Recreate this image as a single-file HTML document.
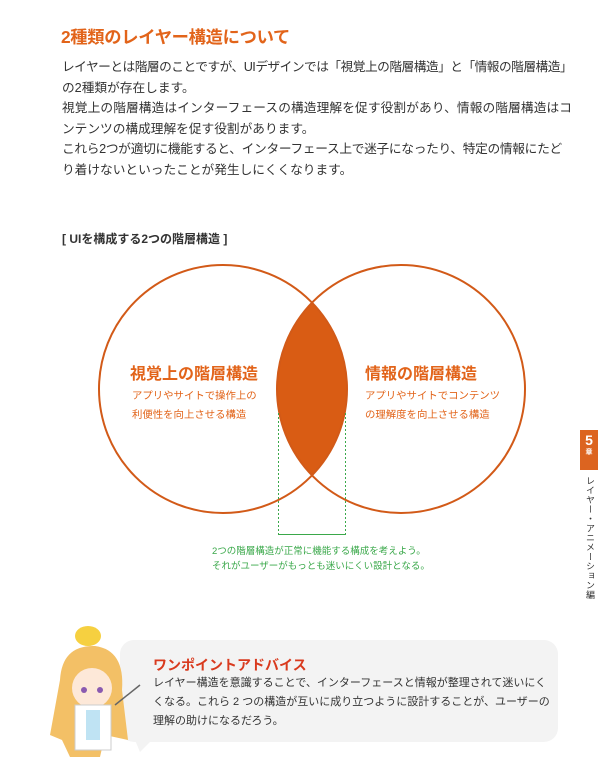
<!DOCTYPE html>
<html><head><meta charset="utf-8"><style>
body{margin:0;width:598px;height:757px;background:#fff;position:relative;overflow:hidden;font-family:"Liberation Sans","Noto Sans CJK JP",sans-serif;color:#333}
.a{position:absolute;white-space:nowrap}
h1{position:absolute;left:61px;top:23px;margin:0;font-size:17.3px;color:#e2641a;font-weight:bold;letter-spacing:-0.3px}
.body{position:absolute;left:62px;top:57px;font-size:12.7px;line-height:20.5px;width:510px;color:#333}
.body div{white-space:nowrap}
.j{text-align:justify;text-align-last:justify;white-space:normal!important}
</style></head><body>
<h1>2種類のレイヤー構造について</h1>
<div class="body">
<div class="j" style="letter-spacing:-0.6px">レイヤーとは階層のことですが、UIデザインでは「視覚上の階層構造」と「情報の階層構造」</div>
<div>の2種類が存在します。</div>
<div class="j">視覚上の階層構造はインターフェースの構造理解を促す役割があり、情報の階層構造はコ</div>
<div>ンテンツの構成理解を促す役割があります。</div>
<div style="letter-spacing:-0.3px">これら2つが適切に機能すると、インターフェース上で迷子になったり、特定の情報にたど</div>
<div>り着けないといったことが発生しにくくなります。</div>
</div>
<div class="a" style="left:62px;top:230px;font-size:12px;font-weight:bold;color:#333">[ UIを構成する2つの階層構造 ]</div>
<svg class="a" style="left:0;top:0" width="598" height="757">
<defs><clipPath id="c"><circle cx="223" cy="389" r="124"/></clipPath></defs>
<circle cx="401" cy="389" r="124" fill="#d95c14" clip-path="url(#c)"/>
<circle cx="223" cy="389" r="124" fill="none" stroke="#d25a18" stroke-width="2"/>
<circle cx="401" cy="389" r="124" fill="none" stroke="#d25a18" stroke-width="2"/>
<path d="M278.5 413V534.5H345.5V413" fill="none" stroke="#3aa84a" stroke-width="1" stroke-dasharray="2,2"/>
<line x1="278" y1="534.5" x2="346" y2="534.5" stroke="#3aa84a" stroke-width="1"/>
<rect x="580" y="430" width="18" height="40" fill="#dc6420"/>
<rect x="120" y="640" width="438" height="102" rx="14" fill="#f3f3f3"/>
<path d="M135 740 L140 752 L152 740Z" fill="#f3f3f3"/>
<ellipse cx="88" cy="636" rx="13" ry="10" fill="#f6d040"/>
<path d="M60 680 Q62 645 95 646 Q125 650 122 690 L128 740 L105 735 L100 757 L70 757 L62 740 L50 735 Z" fill="#f3c066"/>
<ellipse cx="92" cy="688" rx="20" ry="20" fill="#fde8d8"/>
<rect x="75" y="705" width="36" height="45" fill="#fff" stroke="#ccc"/>
<rect x="86" y="710" width="14" height="30" fill="#bfe3f3"/>
<circle cx="84" cy="690" r="3" fill="#8a5ab0"/><circle cx="100" cy="690" r="3" fill="#8a5ab0"/>
<line x1="115" y1="705" x2="140" y2="685" stroke="#666" stroke-width="1.5"/>
</svg>
<div class="a" style="left:130px;top:360px;font-size:16px;font-weight:bold;color:#e2641a">視覚上の階層構造</div>
<div class="a" style="left:132px;top:387px;font-size:10.4px;line-height:19px;color:#e2641a">アプリやサイトで操作上の<br>利便性を向上させる構造</div>
<div class="a" style="left:365px;top:360px;font-size:16px;font-weight:bold;color:#e2641a">情報の階層構造</div>
<div class="a" style="left:365px;top:387px;font-size:10.4px;line-height:19px;color:#e2641a">アプリやサイトでコンテンツ<br>の理解度を向上させる構造</div>
<div class="a" style="left:212px;top:544px;width:200px;text-align:center;font-size:9.5px;line-height:15px;color:#3aa84a">2つの階層構造が正常に機能する構成を考えよう。<br>それがユーザーがもっとも迷いにくい設計となる。</div>
<div class="a" style="left:580px;top:432px;width:18px;text-align:center;color:#fff;font-weight:bold;font-size:14px;line-height:16px">5<div style="font-size:7px;line-height:10px">章</div></div>
<div class="a" style="left:584px;top:476px;writing-mode:vertical-rl;font-size:9px;color:#333;letter-spacing:0.5px">レイヤー・アニメーション編</div>
<div class="a" style="left:153px;top:655px;font-size:14px;font-weight:bold;color:#d93a1e">ワンポイントアドバイス</div>
<div class="a" style="left:153px;top:674px;font-size:11px;line-height:19px;color:#333">レイヤー構造を意識することで、インターフェースと情報が整理されて迷いにく<br>くなる。これら 2 つの構造が互いに成り立つように設計することが、ユーザーの<br>理解の助けになるだろう。</div>
</body></html>
